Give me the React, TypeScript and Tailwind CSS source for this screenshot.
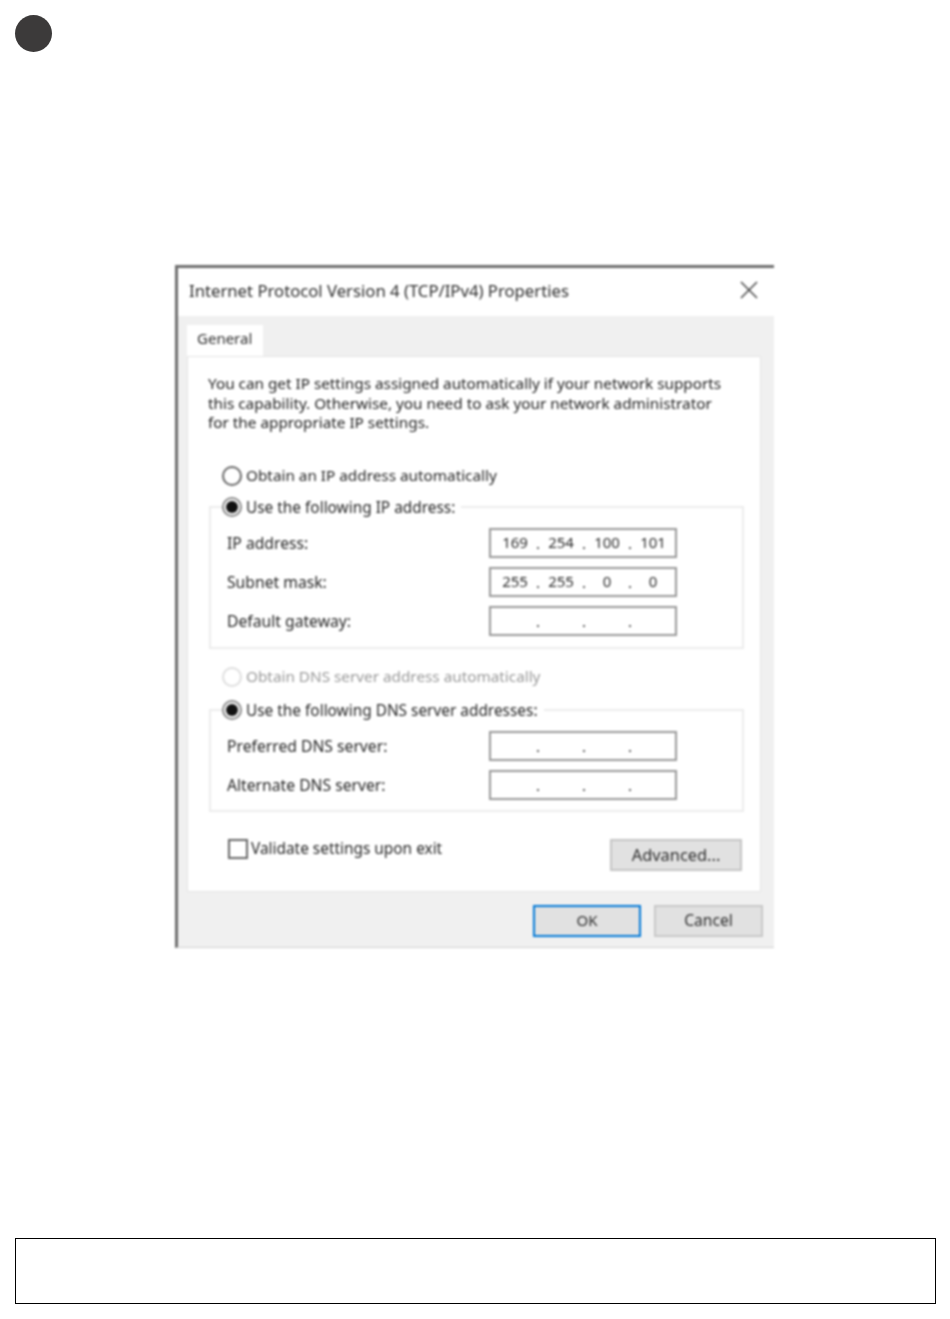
import React from 'react';

function Octets({ values }: { values: string[] }) {
  return (
    <div className="flex h-[30px] w-[188px] items-center border-2 border-[#999] bg-white pl-[5px] text-[15px] text-[#2e2e2e]">
      {values.map((value, i) => (
        <React.Fragment key={i}>
          <span className="w-[38px] pb-[2px] text-center">{value}</span>
          {i < 3 && <span className="w-2 text-center">.</span>}
        </React.Fragment>
      ))}
    </div>
  );
}

function Radio({ checked, disabled }: { checked?: boolean; disabled?: boolean }) {
  return (
    <span
      className={`flex h-5 w-5 shrink-0 items-center justify-center rounded-full border-2 bg-white ${
        disabled ? 'border-[#dedede]' : checked ? 'border-[#8a8a8a]' : 'border-[#666]'
      }`}
    >
      {checked && <span className="h-3 w-3 rounded-full bg-[#111]" />}
    </span>
  );
}

function Field({ label, values }: { label: string; values: string[] }) {
  return (
    <div className="flex items-center">
      <span className="w-[262px] pt-[2px] text-[15.7px] text-[#262626]">{label}</span>
      <Octets values={values} />
    </div>
  );
}

function Group({ legend, bottom, children }: { legend: string; bottom: string; children: React.ReactNode }) {
  return (
    <fieldset className={`ml-px w-[535px] border-2 border-[#ececec] pl-[16px] ${bottom}`}>
      <legend className="-ml-[5px] flex h-[22px] items-center bg-white pr-1.5 text-[15.4px] text-[#262626]">
        <Radio checked />
        <span className="ml-1">{legend}</span>
      </legend>
      <div className="mt-[10px] flex flex-col gap-[9px]">{children}</div>
    </fieldset>
  );
}

export default function App() {
  const empty = ['', '', '', ''];

  return (
    <div className="flex h-[1319px] w-[950px] flex-col bg-white px-[15px] pt-[15px] font-['Noto_Sans',sans-serif] text-[15px]">
      <div className="h-[37px] w-[37px] rounded-full bg-[#3c3a3a]" />

      <div className="ml-[160px] mt-[213px] flex h-[683px] w-[599px] flex-col border-b border-l-[3px] border-t-[3px] border-b-[#d0d0d0] border-l-[#6e6e6e] border-t-[#6e6e6e] blur-[0.8px]">
        {/* Title bar */}
        <div className="flex h-[48px] shrink-0 items-center justify-between bg-white pl-[11px] pr-[16px]">
          <span className="pb-[2px] text-[16.7px] text-[#2e2e2e]">Internet Protocol Version 4 (TCP/IPv4) Properties</span>
          <svg className="-mt-[5px]" width="18" height="18" viewBox="0 0 18 18" stroke="#444" strokeWidth="1.5" fill="none">
            <path d="M1 1 L17 17 M17 1 L1 17" />
          </svg>
        </div>

        {/* Body */}
        <div className="flex flex-1 flex-col bg-[#f0f0f0] pl-[9px] pt-[9px]">
          <div className="flex h-[32px] w-[76px] items-center bg-white pb-[5px] pl-[10px] text-[#2e2e2e]">
            General
          </div>
          <div className="-mt-px h-[536px] w-[574px] border border-[#e4e4e4] bg-white pl-5 pt-[17px]">
            <p className="w-[520px] text-[15.3px] leading-[19.7px] text-[#222]">
              You can get IP settings assigned automatically if your network supports this capability. Otherwise, you
              need to ask your network administrator for the appropriate IP settings.
            </p>

            <div className="ml-[14px] mt-[33px] flex h-5 items-center text-[15.3px] text-[#262626]">
              <Radio />
              <span className="ml-1 pb-[2px]">Obtain an IP address automatically</span>
            </div>

            <div className="mt-[10px]">
              <Group legend="Use the following IP address:" bottom="pb-[11px]">
                <Field label="IP address:" values={['169', '254', '100', '101']} />
                <Field label="Subnet mask:" values={['255', '255', '0', '0']} />
                <Field label="Default gateway:" values={empty} />
              </Group>
            </div>

            <div className="ml-[14px] mt-[18px] flex h-5 items-center text-[15.3px] text-[#999]">
              <Radio disabled />
              <span className="ml-1 pb-[2px]">Obtain DNS server address automatically</span>
            </div>

            <div className="mt-[12px]">
              <Group legend="Use the following DNS server addresses:" bottom="pb-[10px]">
                <Field label="Preferred DNS server:" values={empty} />
                <Field label="Alternate DNS server:" values={empty} />
              </Group>
            </div>

            <div className="mt-[25px] flex w-[534px] items-start justify-between pl-5">
              <div className="flex items-center text-[15.4px] text-[#262626]">
                <span className="h-5 w-5 border-2 border-[#666] bg-white" />
                <span className="ml-[3px]">Validate settings upon exit</span>
              </div>
              <button className="mt-[2px] flex h-[32px] w-[132px] items-center justify-center border-2 border-[#c4c4c4] bg-[#e1e1e1] text-[16.4px] text-[#2e2e2e]">
                Advanced...
              </button>
            </div>
          </div>

          {/* Footer buttons */}
          <div className="mt-[13px] flex w-[576px] justify-end gap-[13px]">
            <button className="flex h-[32px] w-[108px] items-center justify-center border-2 border-[#0078d7] bg-[#e1e1e1] pb-[2px] text-[#2e2e2e]">
              OK
            </button>
            <button className="flex h-[32px] w-[109px] items-center justify-center border-2 border-[#c8c8c8] bg-[#e1e1e1] text-[15.6px] text-[#2e2e2e]">
              Cancel
            </button>
          </div>
        </div>
      </div>

      <div className="ml-0 mt-[290px] h-[66px] w-[921px] border border-black" />
    </div>
  );
}
